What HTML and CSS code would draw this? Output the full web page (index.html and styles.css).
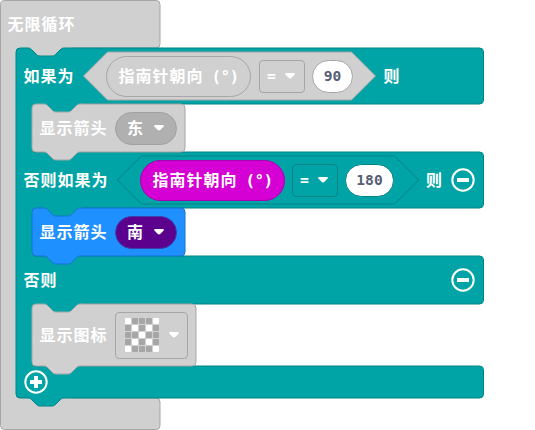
FILE: index.html
```html
<!DOCTYPE html>
<html lang="zh-CN">
<head>
<meta charset="utf-8">
<title>无限循环</title>
<link rel="stylesheet" href="styles.css">
</head>
<body>
<main class="workspace">
  <svg class="shape" width="535" height="430" viewBox="0 0 535 430" aria-hidden="true">
    <path class="off" d="M4.500,.5H156a4 4 0 0 1 4,4V44a4 4 0 0 1-4,4H72V58H18V396H72V398H156a4 4 0 0 1 4,4V425.500a4 4 0 0 1-4,4H4.500a4 4 0 0 1-4-4V4.500a4 4 0 0 1 4-4z"/>
    <path class="logic" d="M16,52a4 4 0 0 1 4-4h8c2,0 3,1 4,2l4,4c1,1 2,2 4,2h12c2,0 3-1 4-2l4-4c1-1 2-2 4-2H479.500a4 4 0 0 1 4,4V100a4 4 0 0 1-4,4H84V114H34V152H479.500a4 4 0 0 1 4,4V204a4 4 0 0 1-4,4H84V218H34V256H479.500a4 4 0 0 1 4,4V300a4 4 0 0 1-4,4H84V314H34V366H479.500a4 4 0 0 1 4,4V394a4 4 0 0 1-4,4H64c-2,0-3,1-4,2l-4,4c-1,1-2,2-4,2H40c-2,0-3-1-4-2l-4-4c-1-1-2-2-4-2H20a4 4 0 0 1-4-4z"/>
  </svg>

  <header class="row head"><span class="label">无限循环</span></header>

  <section class="row cond">
    <span class="label">如果为</span>
    <div class="compare first">
      <svg class="shape" width="293" height="50" viewBox="0 -1 293 50" aria-hidden="true"><path class="off" d="M.5,24L24.500,0H268.500L292.500,24L268.500,48H24.500z"/></svg>
      <span class="reporter muted">指南针朝向<i class="unit">(°)</i></span>
      <span class="operator muted"><i class="mono">=</i><svg class="caret" viewBox="0 0 12 8"><path d="M2 1H10Q11.500 1 10.600 2.500L7.500 5.800Q6 7.200 4.500 5.800L1.400 2.500Q.5 1 2 1z"/></svg></span>
      <span class="number muted mono">90</span>
    </div>
    <span class="label">则</span>
  </section>

  <section class="row child">
    <svg class="shape" width="155" height="58" viewBox="0 0 155 58" aria-hidden="true"><path class="off" d="M0,4a4 4 0 0 1 4-4h8c2,0 3,1 4,2l4,4c1,1 2,2 4,2h12c2,0 3-1 4-2l4-4c1-1 2-2 4-2H149a4 4 0 0 1 4,4V44a4 4 0 0 1-4,4H48c-2,0-3,1-4,2l-4,4c-1,1-2,2-4,2H24c-2,0-3-1-4-2l-4-4c-1-1-2-2-4-2H4a4 4 0 0 1-4-4z"/></svg>
    <span class="label">显示箭头</span>
    <span class="select grey"><span class="label">东</span><svg class="caret" viewBox="0 0 12 8"><path d="M2 1H10Q11.500 1 10.600 2.500L7.500 5.800Q6 7.200 4.500 5.800L1.400 2.500Q.5 1 2 1z"/></svg></span>
  </section>

  <section class="row cond">
    <span class="label">否则如果为</span>
    <div class="compare second">
      <svg class="shape" width="302" height="50" viewBox="0 -1 302 50" aria-hidden="true"><path class="logic" d="M.5,24L24.500,0H277.500L301.500,24L277.500,48H24.500z"/></svg>
      <span class="reporter input">指南针朝向<i class="unit">(°)</i></span>
      <span class="operator teal"><i class="mono">=</i><svg class="caret" viewBox="0 0 12 8"><path d="M2 1H10Q11.500 1 10.600 2.500L7.500 5.800Q6 7.200 4.500 5.800L1.400 2.500Q.5 1 2 1z"/></svg></span>
      <span class="number teal mono">180</span>
    </div>
    <span class="label">则</span>
    <svg class="round" viewBox="0 0 24 24"><circle cx="12" cy="12" r="10.700"/><path d="M6 12H18"/></svg>
  </section>

  <section class="row child">
    <svg class="shape" width="155" height="58" viewBox="0 0 155 58" aria-hidden="true"><path class="basic" d="M0,4a4 4 0 0 1 4-4h8c2,0 3,1 4,2l4,4c1,1 2,2 4,2h12c2,0 3-1 4-2l4-4c1-1 2-2 4-2H149a4 4 0 0 1 4,4V44a4 4 0 0 1-4,4H48c-2,0-3,1-4,2l-4,4c-1,1-2,2-4,2H24c-2,0-3-1-4-2l-4-4c-1-1-2-2-4-2H4a4 4 0 0 1-4-4z"/></svg>
    <span class="label">显示箭头</span>
    <span class="select purple"><span class="label">南</span><svg class="caret" viewBox="0 0 12 8"><path d="M2 1H10Q11.500 1 10.600 2.500L7.500 5.800Q6 7.200 4.500 5.800L1.400 2.500Q.5 1 2 1z"/></svg></span>
  </section>

  <section class="row otherwise">
    <span class="label">否则</span>
    <svg class="round" viewBox="0 0 24 24"><circle cx="12" cy="12" r="10.700"/><path d="M6 12H18"/></svg>
  </section>

  <section class="row child tall">
    <svg class="shape" width="166" height="72" viewBox="0 0 166 72" aria-hidden="true"><path class="off" d="M0,4a4 4 0 0 1 4-4h8c2,0 3,1 4,2l4,4c1,1 2,2 4,2h12c2,0 3-1 4-2l4-4c1-1 2-2 4-2H160a4 4 0 0 1 4,4V58a4 4 0 0 1-4,4H48c-2,0-3,1-4,2l-4,4c-1,1-2,2-4,2H24c-2,0-3-1-4-2l-4-4c-1-1-2-2-4-2H4a4 4 0 0 1-4-4z"/></svg>
    <span class="label">显示图标</span>
    <span class="picture">
      <span class="leds">
        <b class="on"></b><b></b><b></b><b></b><b class="on"></b>
        <b></b><b class="on"></b><b></b><b class="on"></b><b></b>
        <b></b><b></b><b class="on"></b><b></b><b></b>
        <b></b><b class="on"></b><b></b><b class="on"></b><b></b>
        <b class="on"></b><b></b><b></b><b></b><b class="on"></b>
      </span>
      <svg class="caret" viewBox="0 0 12 8"><path d="M2 1H10Q11.500 1 10.600 2.500L7.500 5.800Q6 7.200 4.500 5.800L1.400 2.500Q.5 1 2 1z"/></svg>
    </span>
  </section>

  <footer class="row add">
    <svg class="round" viewBox="0 0 24 24"><circle cx="12" cy="12" r="10.700"/><path d="M6 12H18M12 6V18"/></svg>
  </footer>
</main>
</body>
</html>
```
FILE: styles.css
```css
* { box-sizing: border-box; }

body {
  margin: 0;
  background: #fff;
  overflow: hidden;
}

.workspace {
  position: relative;
  isolation: isolate;
  width: 535px;
  height: 430px;
  color: #fff;
  font: bold 16px/24px "Noto Sans CJK SC", sans-serif;
  letter-spacing: 1px;
  white-space: nowrap;
}

.shape {
  position: absolute;
  top: 0;
  left: 0;
  z-index: -1;
  overflow: visible;
}
.shape path { stroke-width: 1; }
.off { fill: #d0d0d0; stroke: #a6a6a6; }
.logic { fill: #00a4a6; stroke: #008385; }
.basic { fill: #1e90ff; stroke: #1873cc; }

.row {
  position: relative;
  display: flex;
  align-items: center;
}
.head { height: 48px; padding-left: 7.5px; }
.cond { height: 56px; padding-left: 23.5px; }
.child {
  height: 48px;
  margin-left: 32px;
  padding-left: 7.5px;
  z-index: 1;
}
.child.tall { height: 62px; }
.otherwise {
  height: 48px;
  width: 475px;
  padding-left: 23.5px;
  justify-content: space-between;
}
.add { height: 32px; padding-left: 24px; }

.label { padding-bottom: 3px; }

.mono {
  font: bold 14.6px/24px "DejaVu Sans Mono", monospace;
  letter-spacing: 0;
}
.unit {
  margin-left: 8px;
  font: bold 16px/24px "DejaVu Sans Mono", monospace;
  letter-spacing: -0.6px;
}

.compare {
  position: relative;
  isolation: isolate;
  display: flex;
  align-items: center;
  height: 48px;
}
.compare > .shape { top: -1px; }
.first { width: 293px; margin: 0 8px; padding-left: 23.5px; }
.second { width: 302px; margin: 0 7px 0 8.5px; padding-left: 23px; }

.reporter {
  width: 145px;
  height: 41px;
  padding-left: 11.5px;
  border: 1px solid;
  border-radius: 21px;
  line-height: 37px;
}
.input { background: #d400d4; border-color: #a400b0; }
.muted { border-color: #a6a6a6; }
.teal { border-color: #008385; }

.operator {
  display: flex;
  align-items: center;
  justify-content: space-between;
  width: 46px;
  height: 33px;
  margin: 0 7px;
  padding: 0 8px 0 7px;
  border: 1px solid;
  border-radius: 4px;
}
.operator.muted { margin-left: 8px; border-color: #a6a6a6; }
.operator.teal { border-color: #008385; }

.number {
  width: 41px;
  height: 33px;
  border: 1px solid;
  border-radius: 17px;
  background: #fff;
  color: #575e75;
  line-height: 30px;
  text-align: center;
}
.number.muted { border-color: #a6a6a6; }
.number.teal { width: 49px; border-color: #008385; }

.caret { width: 12px; height: 8px; fill: #fff; }

.select {
  display: flex;
  align-items: center;
  justify-content: space-between;
  width: 62px;
  height: 33px;
  margin-left: 7.5px;
  padding: 0 11px;
  border: 1px solid;
  border-radius: 17px;
}
.grey { background: #b0b0b0; border-color: #a0a0a0; }
.purple { background: #5c008e; border-color: #3c3fa8; }

.picture {
  display: flex;
  align-items: center;
  justify-content: space-between;
  width: 73px;
  height: 47px;
  margin-left: 7.5px;
  padding: 0 7px 0 8.5px;
  border: 1px solid #a6a6a6;
  border-radius: 4px;
}
.leds {
  display: grid;
  grid-template-columns: repeat(5, 6px);
  grid-auto-rows: 6px;
  gap: 1.2px;
}
.leds b { border-radius: 1px; background: #a6a6a6; }
.leds .on { background: #fff; }

.round {
  width: 24px;
  height: 24px;
  fill: none;
  stroke: #fff;
  stroke-width: 2;
}
.round path { stroke-width: 4; }
.cond .round { margin-left: 7.5px; }
```
